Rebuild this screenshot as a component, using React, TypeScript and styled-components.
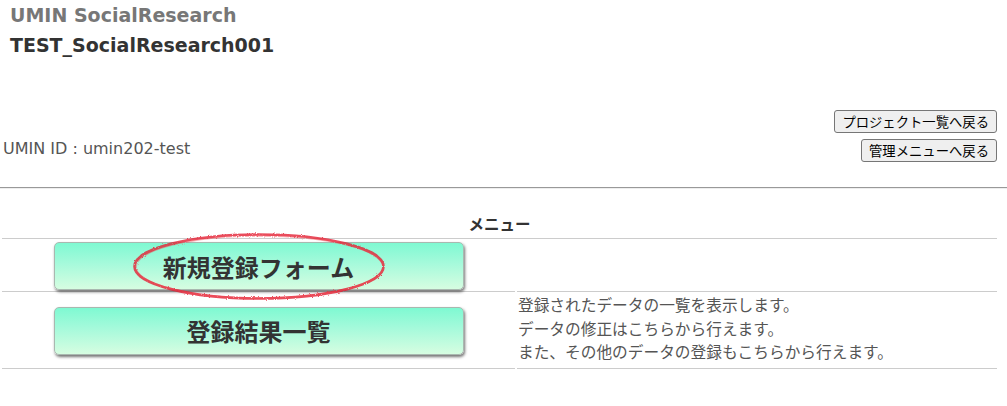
import React from "react";
import styled, { createGlobalStyle } from "styled-components";

const Global = createGlobalStyle`
  html, body { margin: 0; padding: 0; background: #fff; }
  body { font-family: "DejaVu Sans", "Noto Sans CJK JP", sans-serif; color: #555; }
`;

const Page = styled.div`
  width: 1007px;
`;

const Header = styled.header`
  padding: 2px 10px 0 10px;
`;

const SiteTitle = styled.div`
  font-family: "DejaVu Sans", "Noto Sans CJK JP", sans-serif;
  font-size: 19px;
  font-weight: bold;
  color: #777;
  line-height: 26px;
`;

const ProjectTitle = styled.div`
  font-family: "DejaVu Sans", "Noto Sans CJK JP", sans-serif;
  font-size: 19px;
  font-weight: bold;
  color: #333;
  line-height: 26px;
  margin-top: 4px;
`;

const TopBar = styled.div`
  display: flex;
  justify-content: space-between;
  align-items: flex-end;
  padding: 0 10px 0 3px;
  margin-top: 52px;
`;

const UserId = styled.div`
  font-family: "DejaVu Sans", "Noto Sans CJK JP", sans-serif;
  font-size: 16px;
  line-height: 22px;
  color: #555;
  padding-bottom: 2px;
`;

const NavButtons = styled.div`
  display: flex;
  flex-direction: column;
  align-items: flex-end;
  gap: 6px;
`;

const NavButton = styled.button`
  font-family: "Noto Sans CJK JP", sans-serif;
  font-size: 13.33px;
  line-height: 19px;
  color: #000;
  background: #efefef;
  border: 1px solid #767676;
  border-radius: 3px;
  padding: 1px 7px;
  cursor: pointer;
`;

const Divider = styled.hr`
  margin: 25px 0 0 0;
  border: 0;
  border-top: 1px solid #999;
  border-bottom: 1px solid #eee;
  height: 0;
`;

const MenuTable = styled.div`
  margin: 23px 10px 0 2px;
`;

const MenuHeading = styled.div`
  text-align: center;
  font-family: "Noto Sans CJK JP", sans-serif;
  font-size: 15.5px;
  font-weight: bold;
  color: #333;
  line-height: 22px;
  padding-bottom: 4px;
  border-bottom: 1px solid #ccc;
`;

const MenuRow = styled.div`
  display: grid;
  grid-template-columns: 513px 1fr;
  column-gap: 2px;
`;

const ButtonCell = styled.div`
  position: relative;
  display: flex;
  align-items: center;
  justify-content: center;
  border-bottom: 1px solid #ccc;
  padding: 3px 0 1px;
`;

const DescCell = styled.div`
  border-bottom: 1px solid #ccc;
  padding: 1px 1px 4px;
  font-family: "Noto Sans CJK JP", sans-serif;
  font-size: 15.7px;
  line-height: 23.5px;
  color: #555;
  display: flex;
  flex-direction: column;
  justify-content: center;
`;

const MenuButton = styled.button`
  width: 410px;
  height: 48px;
  border: 1px solid #a9b8b0;
  border-radius: 5px;
  background: linear-gradient(to bottom, #7ff9d2 0%, #a6fadb 45%, #d6fde1 100%);
  box-shadow: 1px 2px 3px rgba(0, 0, 0, 0.55);
  font-family: "Noto Sans CJK JP", sans-serif;
  font-size: 24px;
  font-weight: bold;
  color: #333;
  cursor: pointer;
  padding: 0;
`;

const Mark = styled.svg`
  position: absolute;
  left: 129px;
  top: -8px;
  pointer-events: none;
  overflow: visible;
`;

export default function App() {
  return (
    <Page>
      <Global />
      <Header>
        <SiteTitle>UMIN SocialResearch</SiteTitle>
        <ProjectTitle>TEST_SocialResearch001</ProjectTitle>
      </Header>
      <TopBar>
        <UserId>UMIN ID : umin202-test</UserId>
        <NavButtons>
          <NavButton>プロジェクト一覧へ戻る</NavButton>
          <NavButton>管理メニューへ戻る</NavButton>
        </NavButtons>
      </TopBar>
      <Divider />
      <MenuTable>
        <MenuHeading>メニュー</MenuHeading>
        <MenuRow>
          <ButtonCell>
            <MenuButton>新規登録フォーム</MenuButton>
            <Mark width="256" height="75" viewBox="0 0 256 75">
              <defs>
                <filter id="rough" x="-10%" y="-20%" width="120%" height="140%">
                  <feTurbulence type="fractalNoise" baseFrequency="0.9" numOctaves="2" seed="3" />
                  <feDisplacementMap in="SourceGraphic" scale="2.4" />
                </filter>
              </defs>
              <ellipse cx="128" cy="35.5" rx="124.5" ry="32" fill="none" stroke="rgba(228,30,50,0.8)" strokeWidth="2.6" filter="url(#rough)" />
              <ellipse cx="128.5" cy="36" rx="123.5" ry="31" fill="none" stroke="rgba(240,70,80,0.4)" strokeWidth="1.6" filter="url(#rough)" />
            </Mark>
          </ButtonCell>
          <DescCell />
        </MenuRow>
        <MenuRow>
          <ButtonCell>
            <MenuButton>登録結果一覧</MenuButton>
          </ButtonCell>
          <DescCell>
            <div>登録されたデータの一覧を表示します。</div>
            <div>データの修正はこちらから行えます。</div>
            <div>また、その他のデータの登録もこちらから行えます。</div>
          </DescCell>
        </MenuRow>
      </MenuTable>
    </Page>
  );
}
